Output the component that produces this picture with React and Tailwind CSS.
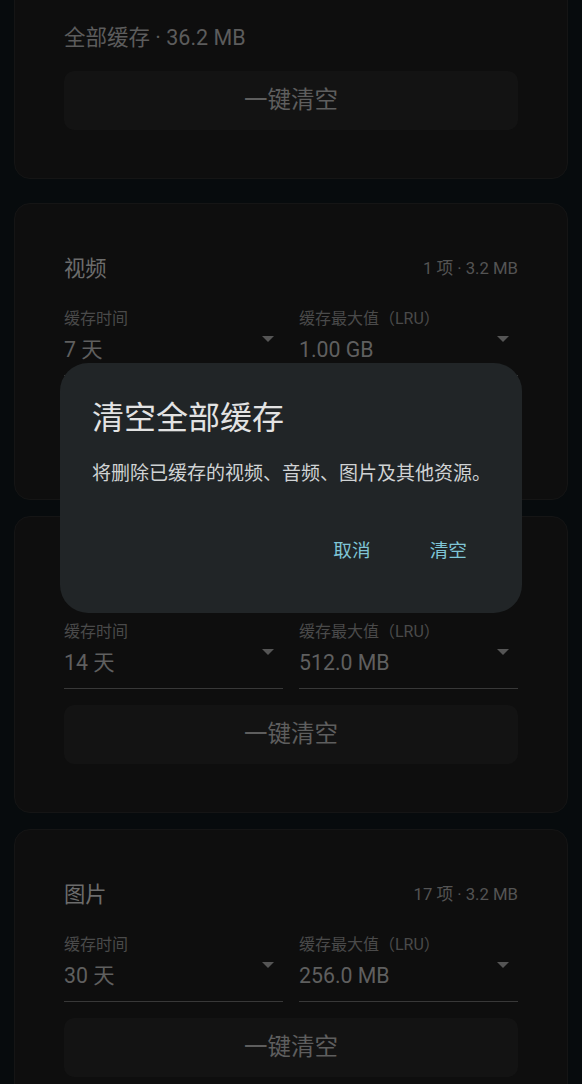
import React from "react";

function Arrow() {
  return (
    <svg width="12" height="6" viewBox="0 0 12 6" className="block">
      <path d="M0 0 L12 0 L6 6 Z" fill="#555555" />
    </svg>
  );
}

function Field({ label, value }) {
  return (
    <div className="flex-1 flex justify-between items-start border-b border-[#383838] pb-[11px]">
      <div className="flex flex-col">
        <div className="text-[16px] leading-[20px] text-[#4a4a4a]">{label}</div>
        <div className="mt-[7px] text-[21.3px] leading-[28px] text-[#5f5f5f]">{value}</div>
      </div>
      <div className="mt-[27px] mr-[9px]">
        <Arrow />
      </div>
    </div>
  );
}

function ClearButton() {
  return (
    <div className="h-[59px] rounded-[10px] bg-[#131313] flex items-center justify-center text-[23.5px] text-[#5e5e5e]">
      一键清空
    </div>
  );
}

function CacheCard({ title, stats, time, max }) {
  return (
    <div className="mx-[14px] h-[297px] rounded-[16px] border border-[#151515] bg-[#0e0e0e] px-[49px] pt-[51px]">
      <div className="flex items-center justify-between h-[28px]">
        <div className="text-[21.3px] leading-[28px] text-[#6c6c6c]">{title}</div>
        <div className="text-[16.7px] leading-[20px] text-[#545454]">{stats}</div>
      </div>
      <div className="mt-[26px] flex gap-[16px]">
        <Field label="缓存时间" value={time} />
        <Field label="缓存最大值（LRU）" value={max} />
      </div>
      <div className="mt-[16px]">
        <ClearButton />
      </div>
    </div>
  );
}

export default function App() {
  return (
    <div className="relative h-[1084px] w-full overflow-hidden bg-[#070b0d] font-[Roboto,'Noto_Sans_CJK_SC',sans-serif]">
      <div className="-mt-[40px] flex flex-col gap-[16px]">
        <div className="mx-[14px] mb-[8px] rounded-[16px] border border-[#151515] bg-[#0e0e0e] px-[49px] pt-[63px] pb-[48px]">
          <div className="text-[21.5px] leading-[28px] text-[#5c5c5c]">全部缓存 · 36.2 MB</div>
          <div className="mt-[19px]">
            <ClearButton />
          </div>
        </div>
        <CacheCard title="视频" stats="1 项 · 3.2 MB" time="7 天" max="1.00 GB" />
        <CacheCard title="音频" stats="3 项 · 0.8 MB" time="14 天" max="512.0 MB" />
        <CacheCard title="图片" stats="17 项 · 3.2 MB" time="30 天" max="256.0 MB" />
      </div>

      <div className="absolute left-[60px] top-[363px] w-[462px] h-[250px] rounded-[28px] bg-[#212527] pl-[32px] pt-[35px]">
        <div className="text-[32px] leading-[40px] text-[#e3e3e3]">清空全部缓存</div>
        <div className="mt-[23px] text-[19px] leading-[26px] text-[#d0d3d4]">
          将删除已缓存的视频、音频、图片及其他资源。
        </div>
        <div className="mt-[40px] flex justify-end gap-[27px] pr-[39px]">
          <div className="h-[48px] px-[16px] flex items-center text-[18.7px] text-[#7fc5d6]">取消</div>
          <div className="h-[48px] px-[16px] flex items-center text-[18.7px] text-[#7fc5d6]">清空</div>
        </div>
      </div>
    </div>
  );
}
